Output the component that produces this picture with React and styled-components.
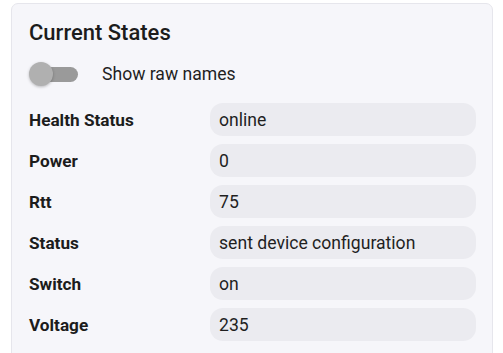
import React, { useState } from "react";
import styled, { createGlobalStyle } from "styled-components";

const GlobalStyle = createGlobalStyle`
  body {
    margin: 0;
    background: #ffffff;
    font-family: Roboto, "Liberation Sans", sans-serif;
    color: #1f1f1f;
  }
`;

const Page = styled.div`
  padding: 3px 10px 0 11px;
`;

const Card = styled.div`
  background: #f6f6fa;
  border: 1px solid #e6e6ec;
  border-radius: 7px;
  padding: 14px 16px 20px 17px;
  height: 400px;
  box-sizing: border-box;
`;

const Title = styled.h2`
  margin: 0;
  font-size: 22px;
  font-weight: 500;
  line-height: 30px;
  color: #1c1c1c;
`;

const ToggleRow = styled.label`
  display: flex;
  align-items: center;
  gap: 24px;
  margin-top: 9px;
  height: 34px;
  font-size: 17.6px;
  cursor: pointer;
`;

const Track = styled.span`
  position: relative;
  display: inline-block;
  width: 49px;
  height: 26px;
  &::before {
    content: "";
    position: absolute;
    left: 11px;
    right: 0;
    top: 6px;
    height: 15px;
    border-radius: 8px;
    background: ${(p) => (p.$on ? "#8fb6ea" : "#9a9a9a")};
  }
`;

const Thumb = styled.span`
  position: absolute;
  top: 1px;
  left: ${(p) => (p.$on ? "24px" : "0")};
  width: 24px;
  height: 24px;
  border-radius: 50%;
  background: ${(p) => (p.$on ? "#1976d2" : "#b0b0b0")};
  box-shadow: 0 1px 3px rgba(0, 0, 0, 0.25);
`;

const Rows = styled.div`
  display: grid;
  grid-template-columns: 181px 1fr;
  row-gap: 8px;
  margin-top: 12px;
  align-items: center;
`;

const Label = styled.div`
  font-size: 17.2px;
  font-weight: 700;
  color: #1c1c1c;
`;

const Value = styled.div`
  background: #ebebf0;
  border-radius: 13px;
  height: 33px;
  display: flex;
  align-items: center;
  padding: 0 9px;
  font-size: 17.6px;
  color: #1f1f1f;
`;

const states = [
  ["Health Status", "online"],
  ["Power", "0"],
  ["Rtt", "75"],
  ["Status", "sent device configuration"],
  ["Switch", "on"],
  ["Voltage", "235"],
];

export default function App() {
  const [raw, setRaw] = useState(false);
  return (
    <Page>
      <GlobalStyle />
      <Card>
        <Title>Current States</Title>
        <ToggleRow onClick={() => setRaw(!raw)}>
          <Track $on={raw}>
            <Thumb $on={raw} />
          </Track>
          Show raw names
        </ToggleRow>
        <Rows>
          {states.map(([k, v]) => (
            <React.Fragment key={k}>
              <Label>{k}</Label>
              <Value>{v}</Value>
            </React.Fragment>
          ))}
        </Rows>
      </Card>
    </Page>
  );
}
